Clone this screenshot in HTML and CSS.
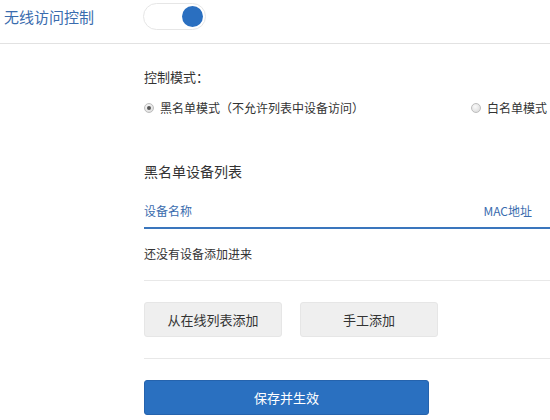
FILE: index.html
```html
<!DOCTYPE html>
<html lang="zh-CN">
<head>
<meta charset="utf-8">
<title>无线访问控制</title>
<link rel="stylesheet" href="styles.css">
</head>
<body>
<div class="header">
  <div class="title">无线访问控制</div>
  <div class="toggle"><span class="knob"></span></div>
</div>
<div class="content">
  <div class="label">控制模式：</div>
  <div class="modes">
    <label class="radio"><span class="dot checked"></span>黑名单模式（不允许列表中设备访问）</label>
    <label class="radio"><span class="dot"></span>白名单模式</label>
  </div>
  <div class="list-title">黑名单设备列表</div>
  <div class="thead">
    <span>设备名称</span>
    <span>MAC地址</span>
  </div>
  <div class="empty">还没有设备添加进来</div>
  <div class="actions">
    <button class="btn">从在线列表添加</button>
    <button class="btn">手工添加</button>
  </div>
  <div class="save-row">
    <button class="save">保存并生效</button>
  </div>
</div>
</body>
</html>
```
FILE: styles.css
```css
html, body {
  margin: 0;
  padding: 0;
  background: #fff;
}
body {
  font-family: "Noto Sans CJK SC", "Microsoft YaHei", sans-serif;
  color: #333;
  font-size: 13px;
  width: 550px;
  overflow: hidden;
}
.header {
  display: flex;
  align-items: center;
  padding: 3px 0 13px 4px;
  border-bottom: 1px solid #e2e2e2;
}
.title {
  width: 139px;
  font-size: 15px;
  color: #3a6cae;
  line-height: 27px;
}
.toggle {
  width: 61px;
  height: 25px;
  border: 1px solid #e6e6e6;
  border-radius: 14px;
  position: relative;
  background: #fff;
}
.knob {
  position: absolute;
  right: 2px;
  top: 2px;
  width: 21px;
  height: 21px;
  border-radius: 50%;
  background: #2a6fc0;
}
.content {
  margin-left: 144px;
}
.label {
  margin-top: 23px;
  line-height: 20px;
  font-size: 13px;
}
.modes {
  display: flex;
  justify-content: space-between;
  margin-top: 11px;
  line-height: 20px;
  font-size: 12px;
  padding-right: 3px;
}
.radio {
  display: flex;
  align-items: center;
}
.dot {
  width: 8px;
  height: 8px;
  border: 1px solid #bdbdbd;
  border-radius: 50%;
  background: radial-gradient(circle at 40% 35%, #fafafa, #d6d6d6);
  margin-right: 6px;
  position: relative;
}
.dot.checked::after {
  content: "";
  position: absolute;
  left: 2px;
  top: 2px;
  width: 4px;
  height: 4px;
  border-radius: 50%;
  background: #555;
}
.list-title {
  margin-top: 43px;
  font-size: 14px;
  line-height: 20px;
}
.thead {
  display: flex;
  justify-content: space-between;
  margin-top: 20px;
  padding: 0 18px 6px 0;
  line-height: 20px;
  font-size: 12px;
  color: #3a6cae;
  border-bottom: 2px solid #3a76bd;
}
.empty {
  margin-top: 15px;
  line-height: 20px;
  font-size: 12px;
  padding-bottom: 16px;
  border-bottom: 1px solid #e8e8e8;
}
.actions {
  display: flex;
  gap: 18px;
  padding: 21px 0 21px;
  border-bottom: 1px solid #e8e8e8;
}
.btn {
  width: 138px;
  height: 35px;
  border: 1px solid #e6e6e6;
  border-radius: 3px;
  background: #efefef;
  color: #333;
  font-family: inherit;
  font-size: 13px;
  padding: 0;
}
.save-row {
  padding-top: 21px;
}
.save {
  width: 285px;
  height: 35px;
  border: 1px solid #2563ad;
  border-radius: 3px;
  background: #2a70c0;
  color: #fff;
  font-family: inherit;
  font-size: 13px;
  padding: 0;
}
```
